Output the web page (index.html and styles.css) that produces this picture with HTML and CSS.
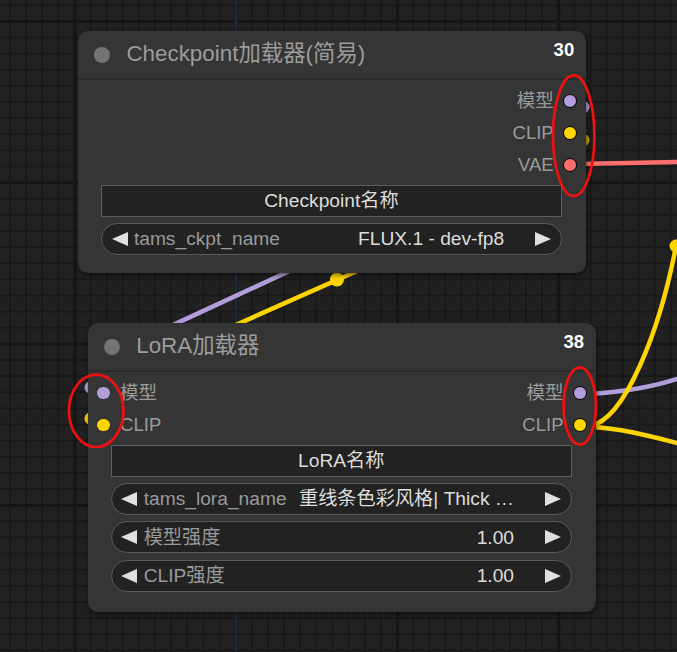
FILE: index.html
```html
<!DOCTYPE html>
<html>
<head>
<meta charset="utf-8">
<link rel="stylesheet" href="styles.css">
</head>
<body>
<div class="canvas">
  <svg class="links" width="677" height="652" viewBox="0 0 677 652">
    <line class="axis" x1="236" y1="0" x2="236" y2="652"/>
    <path class="link" d="M150 335.6 L310 261.5" stroke="#b39ddb"/>
    <path class="link" d="M225 329.7 L360 269.8" stroke="#ffd500"/>
    <circle cx="337" cy="279.5" r="7" fill="#ffd500"/>
    <path class="link" d="M578 164 L677 162" stroke="#ff6e6e"/>
    <circle cx="583" cy="107" r="6.5" fill="#b39ddb"/>
    <circle cx="583" cy="140" r="6.5" fill="#c9a900"/>
    <circle cx="91" cy="387.5" r="6.5" fill="#b39ddb"/>
    <circle cx="91" cy="418.5" r="6.5" fill="#ffd500"/>
    <path class="link" d="M590 394 C620 392 650 388 677 379" stroke="#b39ddb"/>
    <path class="link" d="M590 427 C620 428 650 436 677 443" stroke="#ffd500"/>
    <path class="link" d="M590 426 C625 420 660 330 676 246" stroke="#ffd500"/>
    <circle cx="676" cy="246" r="6.5" fill="#ffd500"/>
  </svg>

  <div class="node node-ckpt">
    <div class="title">
      <span class="tdot"></span>
      <span class="title-text">Checkpoint加载器(简易)</span>
      <span class="nid">30</span>
    </div>
    <div class="body">
      <div class="slot-row">
        <span class="spacer"></span>
        <span class="label">模型</span><span class="slot out purple"></span>
      </div>
      <div class="slot-row">
        <span class="spacer"></span>
        <span class="label">CLIP</span><span class="slot out yellow"></span>
      </div>
      <div class="slot-row">
        <span class="spacer"></span>
        <span class="label">VAE</span><span class="slot out red"></span>
      </div>
      <div class="widgets">
        <div class="wbox">Checkpoint名称</div>
        <div class="combo">
          <span class="arr left"></span>
          <span class="wlabel">tams_ckpt_name</span>
          <span class="wval">FLUX.1 - dev-fp8</span>
          <span class="arr right"></span>
        </div>
      </div>
    </div>
  </div>

  <div class="node node-lora">
    <div class="title">
      <span class="tdot"></span>
      <span class="title-text">LoRA加载器</span>
      <span class="nid">38</span>
    </div>
    <div class="body">
      <div class="slot-row">
        <span class="slot in purple"></span><span class="label in-label">模型</span>
        <span class="spacer"></span>
        <span class="label">模型</span><span class="slot out purple"></span>
      </div>
      <div class="slot-row">
        <span class="slot in yellow"></span><span class="label in-label">CLIP</span>
        <span class="spacer"></span>
        <span class="label">CLIP</span><span class="slot out yellow"></span>
      </div>
      <div class="widgets">
        <div class="wbox">LoRA名称</div>
        <div class="combo">
          <span class="arr left"></span>
          <span class="wlabel">tams_lora_name</span>
          <span class="wval">重线条色彩风格| Thick …</span>
          <span class="arr right"></span>
        </div>
        <div class="combo">
          <span class="arr left"></span>
          <span class="wlabel">模型强度</span>
          <span class="wval">1.00</span>
          <span class="arr right"></span>
        </div>
        <div class="combo">
          <span class="arr left"></span>
          <span class="wlabel">CLIP强度</span>
          <span class="wval">1.00</span>
          <span class="arr right"></span>
        </div>
      </div>
    </div>
  </div>

  <svg class="annot" width="677" height="652" viewBox="0 0 677 652">
    <ellipse cx="573.7" cy="135.7" rx="20.7" ry="60.4"/>
    <ellipse cx="96.2" cy="410.8" rx="27.3" ry="36.2"/>
    <ellipse cx="579.8" cy="406" rx="16.2" ry="38.7"/>
  </svg>
</div>
</body>
</html>
```

FILE: styles.css
```css
* { box-sizing: border-box; }

html, body {
  margin: 0;
  padding: 0;
  background: #202020;
}

body {
  font-family: "Liberation Sans", "Noto Sans CJK SC", sans-serif;
}

.canvas {
  position: relative;
  width: 677px;
  height: 652px;
  overflow: hidden;
  background-color: #212121;
  background-image:
    linear-gradient(to right, #151515 2.5px, transparent 2.5px),
    linear-gradient(to bottom, #151515 2.5px, transparent 2.5px),
    linear-gradient(to right, #181818 2px, transparent 2px),
    linear-gradient(to bottom, #181818 2px, transparent 2px);
  background-size: 161.3px 161.3px, 161.3px 161.3px, 16.13px 16.13px, 16.13px 16.13px;
  background-position: 73.5px 20px, 73.5px 20px, 9px 4.3px, 9px 4.3px;
}

.links {
  position: absolute;
  left: 0;
  top: 0;
}

.links .axis {
  stroke: #1f3150;
  stroke-width: 1.6;
}

.links .link {
  fill: none;
  stroke-width: 4.5;
  stroke-linecap: round;
}

.annot {
  position: absolute;
  left: 0;
  top: 0;
  pointer-events: none;
}

.annot ellipse {
  fill: none;
  stroke: #f01010;
  stroke-width: 2.7;
}

.node {
  position: absolute;
  width: 508.5px;
  background: #353535;
  border-radius: 10px;
  box-shadow: 1px 2px 5px rgba(0, 0, 0, 0.55);
  display: flex;
  flex-direction: column;
}

.node-ckpt {
  left: 77.7px;
  top: 31px;
  height: 242px;
}

.node-lora {
  left: 87.5px;
  top: 323px;
  height: 289px;
}

.title {
  height: 49px;
  border-bottom: 2px solid #2a2a2a;
  display: flex;
  align-items: center;
  padding: 0 12px 0 16px;
}

.tdot {
  width: 16px;
  height: 16px;
  border-radius: 50%;
  background: #737373;
  flex: none;
}

.title-text {
  margin-left: 16.7px;
  font-size: 22.4px;
  line-height: 22.4px;
  color: #9c9c9c;
  white-space: nowrap;
}

.nid {
  margin-left: auto;
  align-self: flex-start;
  margin-top: 9.5px;
  font-size: 18.5px;
  line-height: 18.5px;
  font-weight: bold;
  color: #ffffff;
}

.body {
  padding-top: 5px;
  display: flex;
  flex-direction: column;
}

.slot-row {
  height: 32px;
  display: flex;
  align-items: center;
  padding: 0 9px 0 9.8px;
}

.spacer {
  flex: 1;
}

.label {
  font-size: 18.5px;
  line-height: 18.5px;
  color: #9a9a9a;
  margin-right: 9.5px;
  white-space: nowrap;
}

.label.in-label {
  margin-right: 0;
  margin-left: 10px;
}

.slot {
  flex: none;
  border-radius: 50%;
}

.slot.out {
  width: 14px;
  height: 14px;
  border: 1.5px solid #000;
}

.slot.in {
  width: 12.8px;
  height: 12.8px;
}

.purple { background: #b39ddb; }
.yellow { background: #ffd500; }
.red { background: #ff6e6e; }

.widgets {
  margin-top: 3.5px;
  padding: 0 24.5px 0 23.5px;
  display: flex;
  flex-direction: column;
  gap: 6.4px;
}

.wbox {
  height: 32px;
  background: #222222;
  border: 1px solid #5e5e5e;
  display: flex;
  align-items: center;
  justify-content: center;
  font-size: 19.2px;
  line-height: 19.2px;
  color: #dddddd;
}

.combo {
  height: 32px;
  background: #222222;
  border: 1px solid #5a5a5a;
  border-radius: 16px;
  display: flex;
  align-items: center;
  padding: 0 10px 0 9.4px;
  font-size: 19.2px;
  line-height: 19.2px;
}

.arr {
  flex: none;
  width: 0;
  height: 0;
  border-top: 7.2px solid transparent;
  border-bottom: 7.2px solid transparent;
}

.arr.left {
  border-right: 16.2px solid #e0e0e0;
}

.arr.right {
  border-left: 16.2px solid #e0e0e0;
  margin-left: 30.5px;
}

.wlabel {
  margin-left: 6.3px;
  color: #999999;
  white-space: nowrap;
}

.wval {
  margin-left: auto;
  color: #dddddd;
  white-space: nowrap;
}
```
